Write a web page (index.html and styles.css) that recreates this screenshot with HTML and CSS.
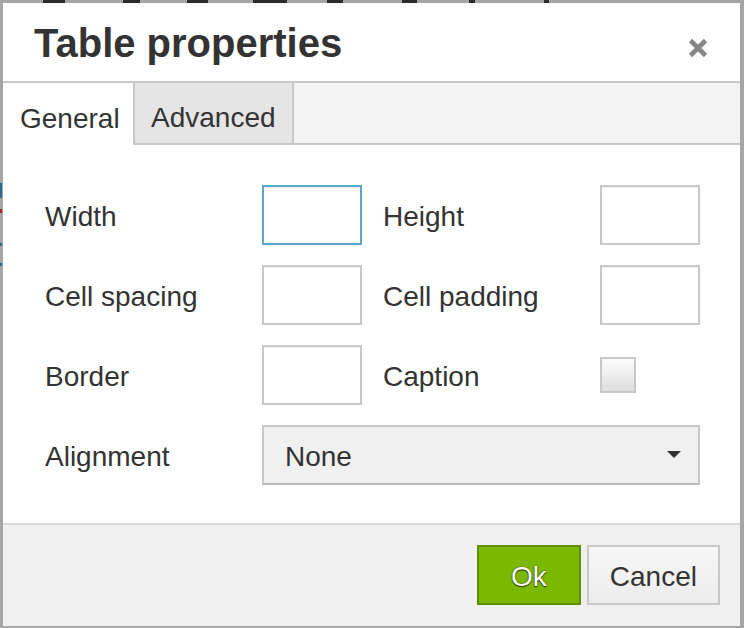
FILE: index.html
```html
<!DOCTYPE html>
<html>
<head>
<meta charset="utf-8">
<link rel="stylesheet" href="styles.css">
</head>
<body>
<div class="backdrop">
  <div class="toolbar">
    <span class="mark m1"></span><span class="mark m2"></span><span class="mark m3"></span><span class="mark m4"></span><span class="mark m5"></span><span class="mark m6"></span><span class="mark m7"></span><span class="mark m8"></span>
  </div>
  <div class="edge">
    <span class="bit blue b1"></span><span class="bit red b2"></span><span class="bit blue b3"></span><span class="bit blue b4"></span>
  </div>
</div>
<div class="dialog">
  <div class="head">
    <h1 class="title">Table properties</h1>
    <button class="close" type="button" aria-label="Close">
      <svg width="20" height="20" viewBox="0 0 20 20"><path d="M2.5 2.5 L17.5 17.5 M17.5 2.5 L2.5 17.5" stroke="#868686" stroke-width="4.6" fill="none"/></svg>
    </button>
  </div>
  <div class="tabs">
    <div class="tab active">General</div>
    <div class="tab">Advanced</div>
  </div>
  <div class="body">
    <div class="grid">
      <label class="lbl">Width</label>
      <div class="input focus"></div>
      <span></span>
      <label class="lbl">Height</label>
      <div class="input"></div>

      <label class="lbl">Cell spacing</label>
      <div class="input"></div>
      <span></span>
      <label class="lbl">Cell padding</label>
      <div class="input"></div>

      <label class="lbl">Border</label>
      <div class="input"></div>
      <span></span>
      <label class="lbl">Caption</label>
      <div class="check-cell"><div class="checkbox"></div></div>

      <label class="lbl">Alignment</label>
      <div class="select">
        <span class="select-text">None</span>
        <svg width="14" height="7" viewBox="0 0 14 7"><path d="M0 0 L14 0 L7 7 Z" fill="#333"/></svg>
      </div>
    </div>
  </div>
  <div class="foot">
    <button class="btn primary" type="button">Ok</button>
    <button class="btn" type="button">Cancel</button>
  </div>
</div>
</body>
</html>
```
FILE: styles.css
```css
* { box-sizing: border-box; }
html, body {
  margin: 0;
  padding: 0;
  width: 744px;
  height: 628px;
  overflow: hidden;
}
body {
  background: #a6a6a6;
  font-family: "Liberation Sans", Arial, Helvetica, sans-serif;
  color: #333;
  position: relative;
}
.backdrop { width: 744px; height: 628px; }
.toolbar {
  display: flex;
  height: 3px;
  padding-left: 43px;
}
.mark { height: 3px; background: #2a2a2a; display: block; }
.m1 { width: 22px; }
.m2 { width: 17px; margin-left: 58px; }
.m3 { width: 21px; margin-left: 47px; }
.m4 { width: 34px; margin-left: 45px; }
.m5 { width: 16px; margin-left: 40px; }
.m6 { width: 15px; margin-left: 59px; }
.m7 { width: 6px; margin-left: 52px; }
.m8 { width: 5px; margin-left: 69px; }
.edge {
  display: flex;
  flex-direction: column;
  width: 2px;
  padding-top: 180px;
}
.bit { display: block; width: 2px; }
.blue { background: #2d6a93; }
.red { background: #b02020; }
.b1 { height: 15px; }
.b2 { height: 4px; margin-top: 11px; }
.b3 { height: 3px; margin-top: 30px; }
.b4 { height: 3px; margin-top: 17px; }

.dialog {
  position: absolute;
  left: 3px;
  top: 3px;
  width: 737px;
  height: 623px;
  background: #fff;
  display: flex;
  flex-direction: column;
}
.head {
  height: 80px;
  flex: none;
  display: flex;
  align-items: center;
  justify-content: space-between;
  padding: 0 32px 0 31px;
  border-bottom: 2px solid #c8c8c8;
}
.title {
  margin: 0;
  font-size: 40px;
  line-height: 1;
  font-weight: bold;
  color: #333;
  padding-top: 2px;
}
.close {
  border: 0;
  background: none;
  padding: 0;
  margin-top: 12px;
  width: 20px;
  height: 20px;
  display: block;
}
.close svg { display: block; }

.tabs {
  height: 62px;
  flex: none;
  display: flex;
  background: #f3f3f3;
  border-bottom: 2px solid #c8c8c8;
}
.tab {
  height: 62px;
  margin-bottom: -2px;
  display: flex;
  align-items: center;
  padding-top: 9px;
  font-size: 28px;
  color: #333;
}
.tab.active {
  width: 130px;
  background: #fff;
  padding-left: 17px;
}
.tab:not(.active) {
  width: 161px;
  background: #e5e5e5;
  border: 2px solid #c8c8c8;
  border-top: 0;
  padding-left: 16px;
}

.body {
  flex: 1;
  padding: 40px 40px 0 42px;
}
.grid {
  display: grid;
  grid-template-columns: 217px 100px 21px 217px 100px;
  grid-auto-rows: 60px;
  row-gap: 20px;
}
.lbl {
  font-size: 28px;
  color: #333;
  align-self: center;
  padding-top: 4px;
  white-space: nowrap;
}
.input {
  border: 2px solid #c8c8c8;
  background: #fff;
  box-shadow: inset 0 1px 1px rgba(0,0,0,0.06);
}
.input.focus { border-color: #5aa7cc; }
.check-cell {
  display: flex;
  align-items: center;
}
.checkbox {
  width: 36px;
  height: 36px;
  border: 2px solid #c8c8c8;
  background: linear-gradient(#fdfdfd, #dcdcdc);
  margin-top: -1px;
}
.select {
  grid-column: 2 / 6;
  background: #f0f0f0;
  border: 2px solid #c8c8c8;
  border-bottom-color: #b8b8b8;
  display: flex;
  align-items: center;
  justify-content: space-between;
  padding: 0 17px 0 21px;
}
.select-text {
  font-size: 28px;
  color: #333;
  padding-top: 3px;
}
.select svg { display: block; margin-top: -2px; }

.foot {
  height: 103px;
  flex: none;
  background: #f0f0f0;
  border-top: 2px solid #d8d8d8;
  display: flex;
  justify-content: flex-end;
  align-items: flex-start;
  padding: 20px 20px 0 0;
  gap: 6px;
}
.btn {
  height: 60px;
  font-family: "Liberation Sans", Arial, Helvetica, sans-serif;
  font-size: 28px;
  color: #333;
  background: linear-gradient(#f7f7f7, #ececec);
  border: 2px solid #c8c8c8;
  padding: 3px 21px 0;
  margin: 0;
  line-height: 1;
}
.btn.primary {
  width: 104px;
  padding: 3px 0 0;
  background: #7db800;
  border-color: #5f8f00;
  color: #fff;
  text-shadow: 0 1px 1px rgba(0,0,0,0.7), 0 0 2px rgba(0,0,0,0.6);
}
```
